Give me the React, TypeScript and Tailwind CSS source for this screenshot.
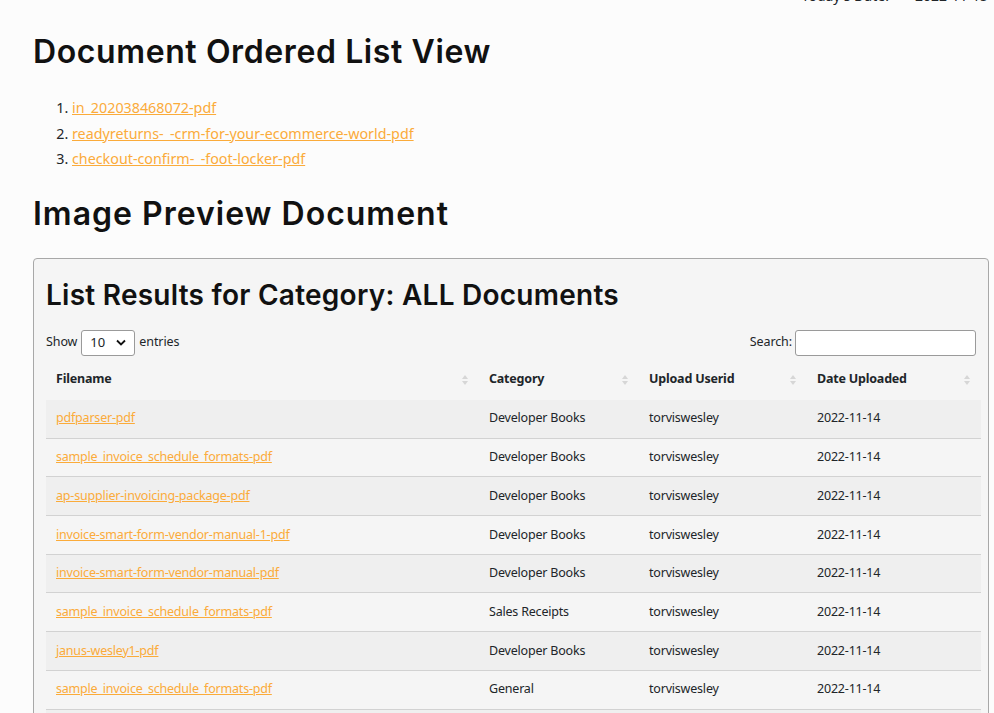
import React from "react";

const rows = [
  ["pdfparser-pdf", "Developer Books"],
  ["sample_invoice_schedule_formats-pdf", "Developer Books"],
  ["ap-supplier-invoicing-package-pdf", "Developer Books"],
  ["invoice-smart-form-vendor-manual-1-pdf", "Developer Books"],
  ["invoice-smart-form-vendor-manual-pdf", "Developer Books"],
  ["sample_invoice_schedule_formats-pdf", "Sales Receipts"],
  ["janus-wesley1-pdf", "Developer Books"],
  ["sample_invoice_schedule_formats-pdf", "General"],
  ["sample_invoice_schedule_formats-pdf", "General"],
  ["sample_invoice_schedule_formats-pdf", "General"],
];

function SortIcon() {
  return (
    <svg width="8" height="16" viewBox="0 0 8 16" className="shrink-0">
      <path d="M4 3 L7 7 L1 7 Z" fill="#d6d6d6" />
      <path d="M4 13 L7 9 L1 9 Z" fill="#d6d6d6" />
    </svg>
  );
}

const head = "font-['Inter',sans-serif] font-semibold text-[#111111]";
const body = "font-['Noto_Sans','Open_Sans',sans-serif]";

export default function App() {
  return (
    <div className={`h-[713px] bg-[#fcfcfc] ${body} text-[#212529] overflow-hidden`}>
      <div className="mt-[-12px] flex justify-end pr-[6px] text-[14px] leading-[16px] h-[16px]">
        <span className="mr-[26px]">Today's Date:</span>
        <span>2022-11-15</span>
      </div>
      <div className="pl-[33px] pr-[5px]">
        <h1 className={`${head} text-[32px] leading-[40px] mt-[28px] tracking-[0.6px]`}>
          Document Ordered List View
        </h1>
        <ol className="list-decimal pl-[39px] mt-[23px] text-[14.3px] leading-[25.5px]">
          <li>
            <a href="#" className="text-[#fbab3a] underline">in_202038468072-pdf</a>
          </li>
          <li>
            <a href="#" className="text-[#fbab3a] underline">readyreturns-_-crm-for-your-ecommerce-world-pdf</a>
          </li>
          <li>
            <a href="#" className="text-[#fbab3a] underline">checkout-confirm-_-foot-locker-pdf</a>
          </li>
        </ol>
        <h2 className={`${head} text-[32px] leading-[40px] mt-[22px] tracking-[1px]`}>
          Image Preview Document
        </h2>
        <div className="mt-[24px] border border-[#a8a8a8] rounded-[4px] bg-[#f5f5f5] pl-[12px] pr-[8px] pt-[18px]">
          <h3 className={`${head} text-[28px] leading-[36px] tracking-[0.25px]`}>
            List Results for Category: ALL Documents
          </h3>
          <div className="flex items-center justify-between mt-[17px] text-[12.5px] tracking-[-0.1px] pr-[4px]">
            <div className="flex items-center gap-[4px]">
              <span>Show</span>
              <div className="flex items-center justify-between w-[54px] h-[26px] border border-[#9a9a9a] rounded-[3px] bg-white px-[8px] text-[13px]">
                <span>10</span>
                <svg width="10" height="7" viewBox="0 0 10 7">
                  <path d="M1 1.5 L5 5.5 L9 1.5" fill="none" stroke="#111" strokeWidth="1.8" />
                </svg>
              </div>
              <span>entries</span>
            </div>
            <div className="flex items-center gap-[3px]">
              <span>Search:</span>
              <div className="w-[181px] h-[26px] border border-[#9a9a9a] rounded-[3px] bg-white" />
            </div>
          </div>
          <table className="w-[935px] mt-[4px] border-collapse text-[12.5px] tracking-[-0.2px]">
            <thead>
              <tr className="h-[40px]">
                {[
                  ["Filename", "w-[433px]"],
                  ["Category", "w-[160px]"],
                  ["Upload Userid", "w-[168px]"],
                  ["Date Uploaded", ""],
                ].map(([t, w]) => (
                  <th key={t} className={`${w} text-left font-bold px-[10px]`}>
                    <div className="flex items-center justify-between">
                      <span>{t}</span>
                      <SortIcon />
                    </div>
                  </th>
                ))}
              </tr>
            </thead>
            <tbody>
              {rows.map(([f, c], i) => (
                <tr
                  key={i}
                  className={`h-[38.7px] border-b border-[#d2d2d2] ${i % 2 === 0 ? "bg-[#efefef]" : "bg-[#f5f5f5]"}`}
                >
                  <td className="px-[10px]">
                    <a href="#" className="text-[#fbab3a] underline">{f}</a>
                  </td>
                  <td className="px-[10px]">{c}</td>
                  <td className="px-[10px]">torviswesley</td>
                  <td className="px-[10px]">2022-11-14</td>
                </tr>
              ))}
            </tbody>
          </table>
        </div>
      </div>
    </div>
  );
}
